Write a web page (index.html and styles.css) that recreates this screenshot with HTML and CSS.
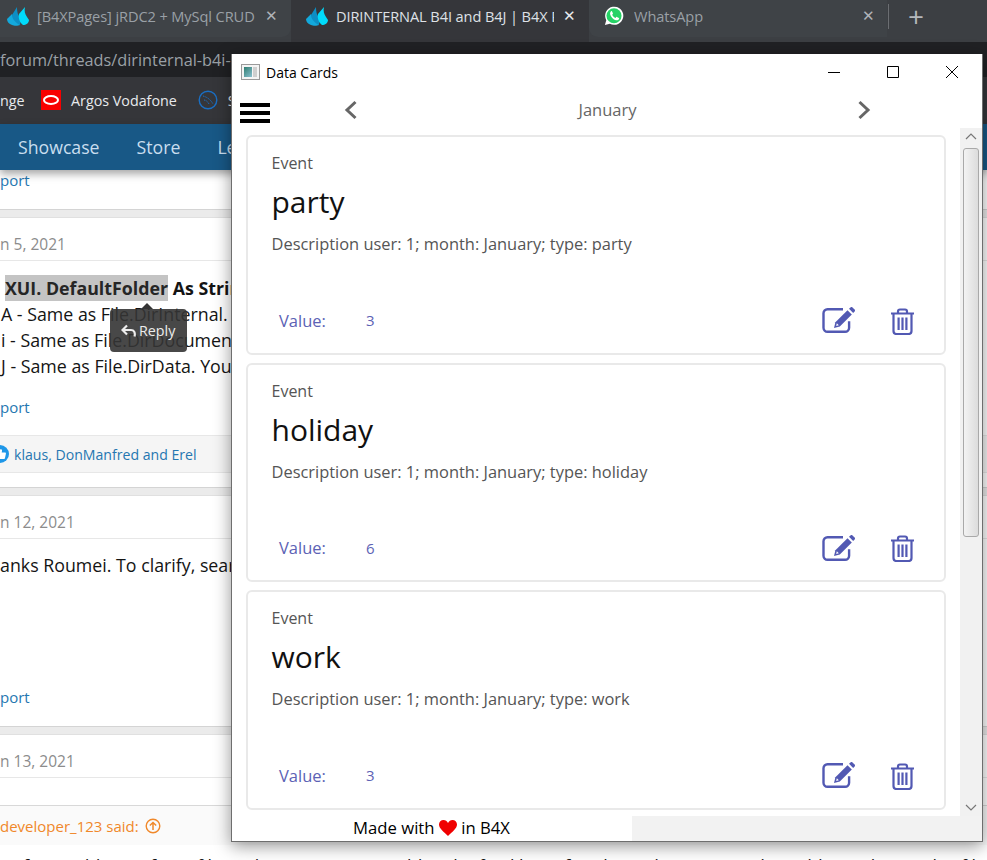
FILE: index.html
```html
<!DOCTYPE html>
<html lang="en">
<head>
<meta charset="utf-8">
<title>Data Cards</title>
<link rel="stylesheet" href="styles.css">
</head>
<body>
<svg class="defs" width="0" height="0" aria-hidden="true">
  <symbol id="b4x" viewBox="0 0 22 20">
    <path fill="#13a9dc" d="M0 13 5 8c1 3 3 6 6 8l2 3c-2 1-6 1-8 0-3-1-5-3-5-6Z"/>
    <path fill="#0d8ec4" d="M5 9 10 1c0 5 1 9 4 11l-1 7c-4-2-8-6-8-10Z"/>
    <path fill="#00dcfb" d="M12 8 18 1c-1 4 0 7 2 10l2 3c0 3-3 5-6 5-3-2-5-7-4-11Z"/>
  </symbol>
  <symbol id="edit" viewBox="0 0 33 26">
    <path fill="none" stroke="currentColor" stroke-width="2.4" stroke-linejoin="round" d="M21 2.2H5.5a4 4 0 0 0-4 4v14.6a4 4 0 0 0 4 4h17.6a4 4 0 0 0 4-4v-6.600"/>
    <path fill="currentColor" d="M25.500 3.300 29.800 7.600 17.800 19.600 12 21 13.400 15.300Z"/>
    <path fill="currentColor" d="M27 1.800 28.500.4a1.500 1.500 0 0 1 2 0L32.600 2.500a1.500 1.500 0 0 1 0 2L31.200 6Z"/>
    <path fill="#fff" d="M14.800 16.200 16.800 18.200 14.200 18.900Z"/>
  </symbol>
  <symbol id="trash" viewBox="0 0 25 27">
    <path fill="none" stroke="currentColor" stroke-width="2.200" stroke-linejoin="round" d="M1 5.500H24M8 5.500V3.500a2 2 0 0 1 2-2h5a2 2 0 0 1 2 2v2M3.500 5.500V23a3 3 0 0 0 3 3h12a3 3 0 0 0 3-3V5.500"/>
    <path fill="currentColor" d="M7.500 9.500h2.200v12.500H7.500zM11.400 9.500h2.200v12.500h-2.200zM15.300 9.500h2.200v12.500h-2.200z"/>
  </symbol>
</svg>

<div class="browser">
  <div class="tabstrip">
    <div class="tab tab-inactive tab-first">
      <svg class="favicon"><use href="#b4x"/></svg>
      <span class="tab-title">[B4XPages] jRDC2 + MySql CRUD</span>
      <span class="tab-close">✕</span>
    </div>
    <div class="tab tab-active">
      <svg class="favicon"><use href="#b4x"/></svg>
      <span class="tab-title">DIRINTERNAL B4I and B4J | B4X Programming</span>
      <span class="tab-close">✕</span>
    </div>
    <div class="tab tab-inactive tab-wa">
      <svg class="favicon" viewBox="0 0 22 22">
        <path fill="#fff" d="M1 21l1.500-5.400A10 10 0 1 1 6.400 19.500Z"/>
        <circle cx="11" cy="10.700" r="8.300" fill="#25d366"/>
        <path fill="#fff" d="M7.900 5.800c-.9.700-1.500 2-1.100 3.500.7 2.800 3.400 5.500 6.300 6.300 1.500.4 2.900-.3 3.400-1.300.3-.6.200-1-.1-1.200l-2.200-1.100c-.3-.1-.5 0-.7.200l-.8 1c-1.600-.6-3-2-3.700-3.600l.7-.9c.2-.2.200-.5.100-.7l-.9-2c-.2-.4-.5-.5-1-.3Z"/>
      </svg>
      <span class="tab-title">WhatsApp</span>
      <span class="tab-close">✕</span>
    </div>
    <span class="tab-sep"></span>
    <span class="tab-new">+</span>
  </div>
  <div class="addressbar">
    <span class="url">forum/threads/dirinternal-b4i-and-b4j.126129/#post-792565</span>
  </div>
  <div class="bookmarks">
    <span class="bm bm-first">nge</span>
    <span class="oracle"><span class="oracle-ring"></span></span>
    <span class="bm">Argos Vodafone</span>
    <svg class="globe" viewBox="0 0 20 20">
      <circle cx="10" cy="10" r="8.800" fill="none" stroke="#1a6fc4" stroke-width="1.400"/>
      <path fill="none" stroke="#1a6fc4" stroke-width="1" stroke-dasharray="1.500 1" d="M5 6c4 1 8 4 10 8M6 10c2 0 4 2 5 4"/>
    </svg>
    <span class="bm">Sites</span>
  </div>
  <nav class="sitenav">
    <span class="nav-item">Showcase</span>
    <span class="nav-item">Store</span>
    <span class="nav-item">Learn</span>
  </nav>
  <main class="forum">
    <div class="row-report row-report-top"><span class="link">port</span></div>
    <div class="strip"></div>
    <article class="post post-a">
      <div class="date">n 5, 2021</div>
      <div class="body body-a">
        <p class="bold"><mark class="sel">XUI. DefaultFolder</mark> As String</p>
        <p class="indent">A - Same as File.DirInternal.</p>
        <p class="indent">i - Same as File.DirDocuments.</p>
        <p class="indent">J - Same as File.DirData. You</p>
      </div>
      <div class="row-report row-report-a"><span class="link">port</span></div>
      <div class="likes">
        <svg class="like-icon" viewBox="0 0 18 18">
          <circle cx="9" cy="9" r="9" fill="#1f97e8"/>
          <path fill="#fff" d="M4 8.500h2.500V14H4zM7.500 8.500 9.500 4c1.200 0 1.700 1 1.500 2l-.3 1.500H14c.7 0 1 .6.900 1.200L14 13c-.1.600-.6 1-1.200 1H7.500Z"/>
        </svg>
        <span class="link">klaus, DonManfred and Erel</span>
      </div>
    </article>
    <div class="strip"></div>
    <article class="post post-b">
      <div class="date">n 12, 2021</div>
      <div class="body body-b">
        <p class="thanks">anks Roumei. To clarify, search for it on the forum and you will see many threads about this topic too</p>
      </div>
      <div class="row-report row-report-b"><span class="link">port</span></div>
    </article>
    <div class="strip"></div>
    <article class="post post-c">
      <div class="date">n 13, 2021</div>
      <div class="spacer"></div>
      <div class="quote-head">
        <span>developer_123 said:</span>
        <svg class="quote-up" viewBox="0 0 16 16">
          <circle cx="8" cy="8" r="6.800" fill="none" stroke="#f0882a" stroke-width="1.400"/>
          <path fill="none" stroke="#f0882a" stroke-width="1.500" d="M8 12V4.500M4.800 7.500 8 4.500l3.200 3"/>
        </svg>
      </div>
      <p class="quote-text">ix if you add any of text file to the assets you would in the final line of each window you need to add it to the app list file</p>
    </article>
  </main>
</div>

<div class="reply-tip">
  <span class="reply-arrow"></span>
  <svg class="reply-icon" viewBox="0 0 16 14"><path fill="none" stroke="#ededed" stroke-width="2.200" d="M6 1.500 1.500 6 6 10.500M1.500 6H10c3 0 4.500 2.500 3.500 6.500"/></svg>
  <span>Reply</span>
</div>

<section class="window">
  <header class="titlebar">
    <span class="app-icon"><span class="app-icon-pane"></span><span class="app-icon-side"></span></span>
    <span class="win-title">Data Cards</span>
    <span class="win-controls">
      <svg class="win-btn" viewBox="0 0 12 12"><path d="M0 6.500H12" stroke="#000" fill="none"/></svg>
      <svg class="win-btn" viewBox="0 0 12 12"><path d="M.5.5H11.500V11.500H.5Z" stroke="#000" fill="none"/></svg>
      <svg class="win-btn" viewBox="0 0 12 12"><path d="M0 0 12 12M12 0 0 12" stroke="#000" fill="none" stroke-width="1"/></svg>
    </span>
  </header>
  <div class="toolbar">
    <span class="burger"><i></i><i></i><i></i></span>
    <svg class="chev chev-left" viewBox="0 0 14 20"><path d="M11.500 2 3 10l8.500 8" fill="none" stroke="#666" stroke-width="3"/></svg>
    <span class="month">January</span>
    <svg class="chev chev-right" viewBox="0 0 14 20"><path d="M2.500 2 11 10l-8.500 8" fill="none" stroke="#666" stroke-width="3"/></svg>
  </div>
  <div class="content">
    <div class="cards">
      <div class="card">
        <div class="card-label">Event</div>
        <div class="card-title">party</div>
        <div class="card-desc">Description user: 1; month: January; type: party</div>
        <div class="card-foot">
          <span class="value-label">Value:</span><span class="value">3</span>
          <svg class="ico ico-edit"><use href="#edit"/></svg>
          <svg class="ico ico-trash"><use href="#trash"/></svg>
        </div>
      </div>
      <div class="card">
        <div class="card-label">Event</div>
        <div class="card-title">holiday</div>
        <div class="card-desc">Description user: 1; month: January; type: holiday</div>
        <div class="card-foot">
          <span class="value-label">Value:</span><span class="value">6</span>
          <svg class="ico ico-edit"><use href="#edit"/></svg>
          <svg class="ico ico-trash"><use href="#trash"/></svg>
        </div>
      </div>
      <div class="card">
        <div class="card-label">Event</div>
        <div class="card-title">work</div>
        <div class="card-desc">Description user: 1; month: January; type: work</div>
        <div class="card-foot">
          <span class="value-label">Value:</span><span class="value">3</span>
          <svg class="ico ico-edit"><use href="#edit"/></svg>
          <svg class="ico ico-trash"><use href="#trash"/></svg>
        </div>
      </div>
    </div>
    <div class="scrollbar">
      <svg class="sb-arrow" viewBox="0 0 12 7"><path d="M1 6 6 1l5 5" fill="none" stroke="#777" stroke-width="1.200"/></svg>
      <div class="sb-track"><div class="sb-thumb"></div></div>
      <svg class="sb-arrow" viewBox="0 0 12 7"><path d="M1 1l5 5 5-5" fill="none" stroke="#777" stroke-width="1.200"/></svg>
    </div>
  </div>
  <footer class="win-foot">
    <div class="made">Made with <svg class="heart" viewBox="0 0 18 16"><path fill="#f00000" d="M9 16C5 12 0 8.500 0 4.500 0 1.800 2 0 4.500 0 6.500 0 8 1 9 3c1-2 2.500-3 4.500-3C16 0 18 1.800 18 4.500 18 8.500 13 12 9 16Z"/></svg> in B4X</div>
    <div class="foot-fill"></div>
  </footer>
</section>
</body>
</html>
```

FILE: styles.css
```css
* { box-sizing: border-box; }
html, body { margin: 0; height: 100%; }
body {
  position: relative;
  width: 987px;
  height: 860px;
  overflow: hidden;
  background: #fff;
  font-family: "Open Sans", "Noto Sans", sans-serif;
}
.defs { position: absolute; }
p { margin: 0; }

/* browser chrome */
.browser { display: flex; flex-direction: column; height: 860px; overflow: hidden; }
.tabstrip {
  display: flex;
  align-items: flex-start;
  height: 42px;
  flex: none;
  background: #3c3f43;
}
.tab {
  display: flex;
  align-items: center;
  height: 37px;
  flex: none;
  font-size: 14.600px;
  letter-spacing: -0.1px;
  position: relative;
  white-space: nowrap;
  padding-bottom: 6px;
}
.tab-first { width: 291px; background: #3f4347; padding-left: 7px; color: #9aa0a6; border-bottom-right-radius: 9px; }
.tab-active { width: 298px; height: 42px; padding: 0 0 11px 15px; background: #35363a; color: #dee1e6; }
.tab-wa { width: 298px; padding-left: 14px; color: #9aa0a6; border-bottom-left-radius: 9px; background: #3f4347; }
.favicon { width: 22px; height: 20px; flex: none; }
.tab-title { display: block; overflow: hidden; margin-left: 8px; }
.tab-first .tab-title { width: 220px; }
.tab-active .tab-title { width: 218px; }
.tab-wa .tab-title { width: 228px; margin-left: 9px; }
.tab-close { position: absolute; top: 5px; font-size: 15px; letter-spacing: 0; color: #b0b3b8; }
.tab-first .tab-close { left: 265px; }
.tab-active .tab-close { left: 272px; color: #e8eaed; }
.tab-wa .tab-close { left: 273px; }
.tab-sep { width: 1px; height: 25px; margin: 4px 0 0 1px; background: #6b6e72; flex: none; }
.tab-new { margin: -3px 0 0 19px; font-size: 28px; line-height: 38px; color: #b5b8bc; flex: none; }

.addressbar {
  height: 35px;
  flex: none;
  background: #202124;
  color: #9aa0a6;
  font-size: 16.300px;
  line-height: 36px;
  white-space: nowrap;
  overflow: hidden;
}

.bookmarks {
  height: 47px;
  flex: none;
  background: #35363a;
  display: flex;
  align-items: center;
  color: #e8eaed;
  font-size: 14.300px;
  padding-bottom: 1px;
  white-space: nowrap;
}
.bm-first { width: 41px; }
.oracle {
  width: 20px;
  height: 20px;
  flex: none;
  background: #f80000;
  display: flex;
  align-items: center;
  justify-content: center;
  margin-right: 10px;
}
.oracle-ring { display: block; width: 16px; height: 10px; border: 2px solid #fff; border-radius: 8px / 5px; }
.globe { width: 20px; height: 20px; margin: 0 10px 0 21px; flex: none; }

.sitenav {
  height: 46px;
  flex: none;
  background: #185886;
  display: flex;
  align-items: center;
  gap: 37px;
  padding-left: 18px;
  color: #c9deef;
  font-size: 17.700px;
  box-shadow: 0 4px 8px rgba(0, 0, 0, .35);
  position: relative;
  z-index: 1;
}

/* forum page */
.forum { flex: 1; display: flex; flex-direction: column; color: #141414; font-size: 17.800px; }
.link { color: #2577b1; }
.row-report { display: flex; align-items: center; font-size: 15px; white-space: nowrap; }
.row-report-top { height: 39px; padding-bottom: 19px; }
.strip {
  height: 9px;
  flex: none;
  background: #ebebeb;
  border-top: 1px solid #d4d4d4;
  border-bottom: 1px solid #e0e0e0;
}
.post { flex: none; display: flex; flex-direction: column; }
.date {
  height: 43px;
  flex: none;
  padding-top: 14px;
  color: #8c8c8c;
  font-size: 15.500px;
  line-height: 24px;
  border-bottom: 1px solid #e7e7e7;
  white-space: nowrap;
}
.body { white-space: nowrap; overflow: hidden; line-height: 26px; }
.body-a { height: 131px; padding: 14px 0 0 5px; }
.bold { font-weight: 700; }
.sel { display: inline-block; background: #c4c4c4; color: #262626; line-height: 26px; }
.indent { margin-left: -4px; }
.row-report-a { height: 30px; }
.post-a { height: 269px; }
.likes {
  height: 38px;
  flex: none;
  margin-top: 13px;
  display: flex;
  align-items: center;
  gap: 5px;
  background: #f5f5f5;
  border-top: 1px solid #e7e7e7;
  border-bottom: 1px solid #e7e7e7;
  font-size: 14.100px;
}
.like-icon { width: 18px; height: 18px; margin-left: -9px; flex: none; }
.post-b { height: 230px; }
.body-b { height: 143px; padding-top: 13px; }
.row-report-b { height: 30px; }
.post-c { flex: 1; }
.spacer { height: 28px; flex: none; border-bottom: 1px solid #d8d8d8; }
.quote-head {
  height: 39px;
  flex: none;
  display: flex;
  align-items: center;
  gap: 6px;
  background: #fafafa;
  color: #f0882a;
  font-size: 15px;
}
.quote-up { width: 16px; height: 16px; }
.quote-text { white-space: nowrap; margin-top: 8px; line-height: 26px; }

/* tooltip */
.reply-tip {
  position: absolute;
  left: 110px;
  top: 309px;
  width: 77px;
  height: 43px;
  background: rgba(52, 52, 52, .9);
  border-radius: 4px;
  color: #ececec;
  font-size: 14.300px;
  display: flex;
  align-items: center;
  gap: 2px;
  padding-left: 11px;
}
.reply-arrow {
  position: absolute;
  left: 31px;
  top: -6px;
  width: 0;
  height: 0;
  border: 6px solid transparent;
  border-top: 0;
  border-bottom-color: #343434;
}
.reply-icon { width: 16px; height: 14px; }

/* desktop app window */
.window {
  position: absolute;
  z-index: 2;
  left: 231px;
  top: 54px;
  width: 752px;
  height: 788px;
  display: flex;
  flex-direction: column;
  background: #fff;
  border: 1px solid #6e6e6e;
  border-top: 0;
  box-shadow: 0 4px 16px rgba(0, 0, 0, .42);
}
.titlebar { height: 36px; flex: none; display: flex; align-items: center; color: #000; font-size: 14px; }
.app-icon {
  width: 19px;
  height: 16px;
  margin-left: 9px;
  display: flex;
  gap: 1px;
  padding: 2px;
  background: #f4f4f4;
  border: 1px solid #9a9a9a;
  flex: none;
}
.app-icon-pane { flex: 1; background: linear-gradient(135deg, #2f7d70, #8ac0d0); }
.app-icon-side { width: 4px; background: #cfcfcf; }
.win-title { margin-left: 6px; }
.win-controls { margin-left: auto; display: flex; gap: 47px; padding-right: 24px; }
.win-btn { width: 12px; height: 12px; display: block; }
.toolbar { height: 38px; flex: none; position: relative; display: flex; align-items: center; justify-content: center; }
.burger { position: absolute; left: 8px; top: 13px; width: 30px; display: flex; flex-direction: column; gap: 4px; }
.burger i { display: block; height: 4px; background: #000; }
.chev { width: 14px; height: 20px; position: absolute; top: 10px; }
.chev-left { left: 112px; }
.chev-right { left: 625px; }
.month { color: #666; font-size: 16.500px; margin-right: -1px; }

.content { flex: 1; min-height: 0; display: flex; overflow: hidden; }
.cards { flex: 1; min-width: 0; padding: 7px 0 0 14px; display: flex; flex-direction: column; gap: 8px; overflow: hidden; }
.card {
  width: 700px;
  height: 219.500px;
  flex: none;
  border: 2px solid #e9e9e9;
  border-radius: 6px;
  padding: 14px 0 0 23.500px;
  display: flex;
  flex-direction: column;
  background: #fff;
}
.card-label { font-size: 16px; line-height: 24px; color: #555; }
.card-title { font-size: 30px; line-height: 44px; margin-top: 5px; color: #111; }
.card-desc { font-size: 16.430px; line-height: 24px; margin-top: 8px; color: #555; }
.card-foot { margin-top: 50px; display: flex; align-items: center; height: 28px; color: #5c62b5; font-size: 16.500px; padding-left: 7.500px; }
.value-label { width: 87px; }
.value { font-size: 15px; }
.ico { color: #5259b3; flex: none; }
.ico-edit { width: 33px; height: 26px; margin-left: auto; }
.ico-trash { width: 25px; height: 27px; margin: 2px 29px 0 35px; }

.scrollbar {
  width: 22px;
  flex: none;
  background: #f1f1f1;
  display: flex;
  flex-direction: column;
  align-items: center;
}
.sb-arrow { width: 12px; height: 7px; flex: none; margin: 5px 0; }
.sb-track { flex: 1; width: 100%; padding: 3px 3px 0; }
.sb-thumb {
  height: 389px;
  border: 1px solid #a9a9a9;
  border-radius: 3px;
  background: linear-gradient(90deg, #f3f3f3, #dcdcdc);
}
.win-foot { height: 25px; flex: none; display: flex; }
.made {
  width: 400px;
  padding-left: 121px;
  font-size: 16.700px;
  line-height: 24px;
  color: #000;
  white-space: nowrap;
}
.heart { width: 18px; height: 16px; vertical-align: -2px; }
.foot-fill { flex: 1; background: #f2f2f2; }
```
